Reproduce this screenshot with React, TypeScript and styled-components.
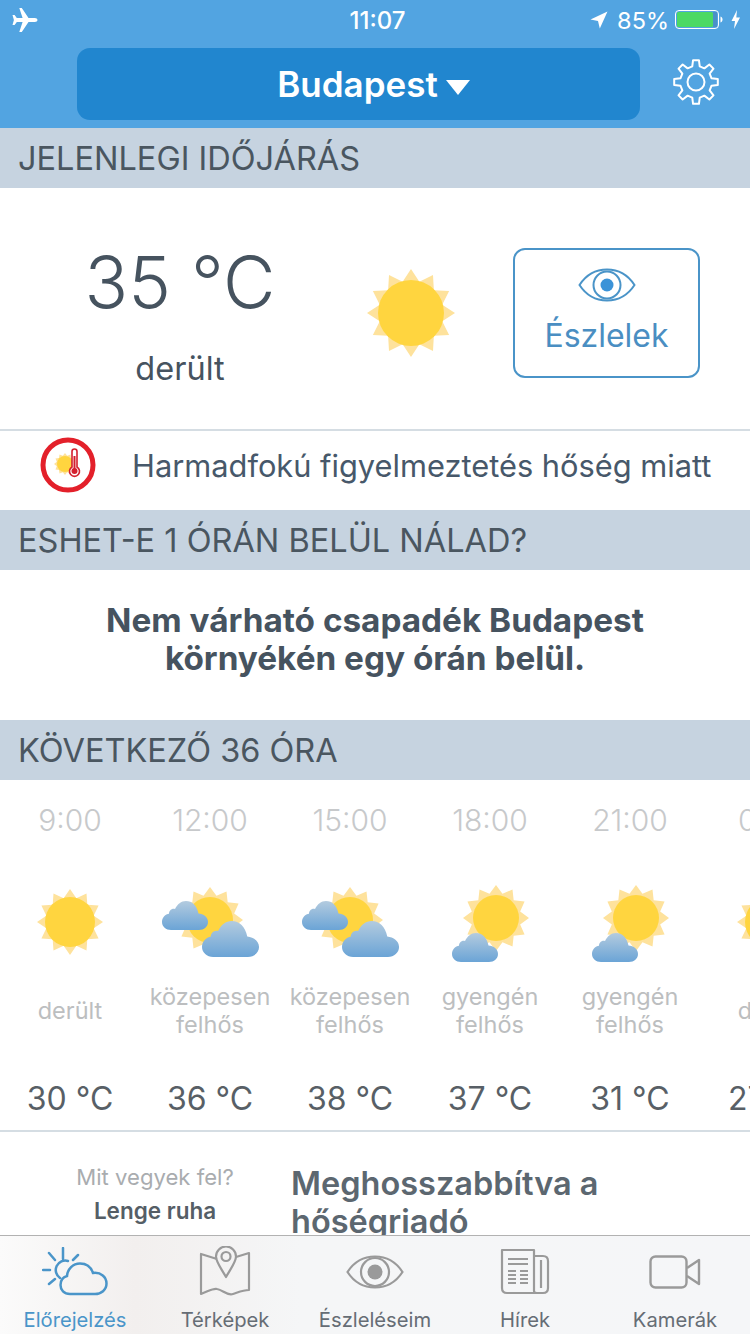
import styled, { createGlobalStyle } from "styled-components";

const GlobalStyle = createGlobalStyle`
  html, body {
    margin: 0;
    padding: 0;
    background: #fff;
  }
  * {
    box-sizing: border-box;
  }
`;

const Phone = styled.div`
  width: 750px;
  height: 1334px;
  display: flex;
  flex-direction: column;
  overflow: hidden;
  font-family: Inter, "Noto Sans", sans-serif;
  background: #fff;
`;

const Header = styled.header`
  height: 128px;
  flex-shrink: 0;
  background: #52a4e1;
  color: #fff;
`;

const StatusBar = styled.div`
  height: 40px;
  padding: 0 7px 0 12px;
  display: grid;
  grid-template-columns: 1fr auto 1fr;
  align-items: center;
`;

const StatusRight = styled.div`
  display: flex;
  align-items: center;
  justify-content: flex-end;
  gap: 9px;
  font-size: 23.5px;
`;

const Time = styled.div`
  font-size: 24px;
  font-weight: 500;
`;

const NavRow = styled.div`
  height: 88px;
  padding: 8px 31px 8px 77px;
  display: flex;
  align-items: center;
  justify-content: space-between;
`;

const CityButton = styled.div`
  width: 563px;
  height: 72px;
  padding-left: 30px;
  background: #2186cf;
  border-radius: 13px;
  display: flex;
  align-items: center;
  justify-content: center;
  gap: 8px;
  font-size: 35px;
  font-weight: 600;
`;

const Caret = styled.span`
  width: 0;
  height: 0;
  margin-top: 7px;
  border-left: 12px solid transparent;
  border-right: 12px solid transparent;
  border-top: 15px solid #fff;
`;

const GearWrap = styled.div`
  display: flex;
  margin-bottom: 4px;
`;

const Content = styled.main`
  flex: 1;
  min-height: 0;
  overflow: hidden;
`;

const SectionTitle = styled.h2`
  margin: 0;
  height: 60px;
  padding: 0 18px;
  display: flex;
  align-items: center;
  background: #c6d3e0;
  color: #4a5660;
  font-size: 32.5px;
  font-weight: 400;
  white-space: nowrap;
`;

const Current = styled.section`
  height: 243px;
  padding: 60px 50px 0 0;
  display: grid;
  grid-template-columns: 360px 153px 187px;
  align-items: start;
  border-bottom: 2px solid #d5dde3;
`;

const CurrentTemp = styled.div`
  display: flex;
  flex-direction: column;
  align-items: center;
  color: #46535f;
`;

const BigTemp = styled.div`
  margin-top: -2px;
  font-size: 72px;
  font-weight: 300;
  line-height: 72px;
`;

const Condition = styled.div`
  margin-top: 32px;
  font-size: 32.5px;
  line-height: 38px;
`;

const ReportButton = styled.div`
  height: 130px;
  border: 2px solid #4a94c8;
  border-radius: 12px;
  display: flex;
  flex-direction: column;
  align-items: center;
  gap: 14px;
  padding-top: 18px;
  color: #4a8ec2;
  font-size: 32px;
  line-height: 40px;
`;

const SunSlot = styled.div`
  height: 130px;
  display: flex;
  justify-content: center;
  padding-top: 20px;
  padding-right: 51px;
`;

const Warning = styled.section`
  height: 79px;
  padding: 0 0 11px 39px;
  display: flex;
  align-items: center;
  gap: 35px;
  color: #47586a;
  font-size: 30.8px;
  white-space: nowrap;
`;

const RainMessage = styled.section`
  height: 150px;
  padding-top: 31px;
  text-align: center;
  color: #46535f;
  font-size: 33.3px;
  font-weight: 700;
  line-height: 38px;
  white-space: nowrap;
`;

const Forecast = styled.section`
  height: 352px;
  display: flex;
  overflow: hidden;
  border-bottom: 2px solid #d5dde3;
`;

const Column = styled.div`
  width: 140px;
  flex-shrink: 0;
  display: flex;
  flex-direction: column;
  align-items: center;
  white-space: nowrap;
`;

const HourLabel = styled.div`
  height: 98px;
  padding-top: 22px;
  color: #c7c9cb;
  font-size: 30px;
  line-height: 36px;
  font-weight: 300;
`;

const Description = styled.div`
  height: 82px;
  margin-top: 2px;
  display: flex;
  align-items: center;
  text-align: center;
  color: #bcbec0;
  font-size: 23.5px;
  line-height: 28px;
`;

const TempLabel = styled.div`
  margin-top: 28px;
  color: #585f66;
  font-size: 32px;
  line-height: 38px;
`;

const Teaser = styled.section`
  display: grid;
  grid-template-columns: 291px 1fr;
  padding-top: 29px;
`;

const Clothing = styled.div`
  text-align: center;
  padding-left: 19px;
  font-size: 22.1px;
  line-height: 33px;
  color: #a9acaf;
`;

const ClothingValue = styled.div`
  color: #555e66;
  font-weight: 600;
  font-size: 22.5px;
`;

const Headline = styled.div`
  margin-top: 4px;
  color: #5c6770;
  font-size: 32.5px;
  font-weight: 600;
  line-height: 38px;
  width: 340px;
`;

const TabBar = styled.nav`
  height: 99px;
  flex-shrink: 0;
  display: grid;
  grid-template-columns: repeat(5, 150px);
  background: linear-gradient(90deg, #fbfbfb 0%, #f2efee 18%, #f5f6f7 40%, #f5f6f8 100%);
  border-top: 1px solid #b2b2b2;
`;

const Tab = styled.div<{ $active?: boolean }>`
  display: flex;
  flex-direction: column;
  align-items: center;
  color: ${(p) => (p.$active ? "#4a95c9" : "#666d75")};
  font-size: 20.2px;
  line-height: 24px;
`;

const TabIcon = styled.div`
  height: 72px;
  display: flex;
  align-items: center;
  justify-content: center;
`;

// ray polygon for the sun: 12 triangles round a circle
const starPoints = (cx: number, cy: number, outer: number, inner: number, rays = 12, turn = 0) => {
  const pts: string[] = [];
  for (let i = 0; i < rays * 2; i++) {
    const r = i % 2 === 0 ? outer : inner;
    const a = (Math.PI * i) / rays + turn;
    pts.push(`${(cx + r * Math.cos(a)).toFixed(2)},${(cy + r * Math.sin(a)).toFixed(2)}`);
  }
  return pts.join(" ");
};

const gearPath = (c: number, outer: number, root: number) => {
  const teeth = 8;
  const step = (Math.PI * 2) / teeth;
  let d = "";
  for (let i = 0; i < teeth; i++) {
    const a = i * step - Math.PI / 2;
    const p = [
      [root, a - step * 0.3],
      [outer, a - step * 0.17],
      [outer, a + step * 0.17],
      [root, a + step * 0.3],
    ];
    p.forEach(([r, t], j) => {
      const x = (c + r * Math.cos(t)).toFixed(2);
      const y = (c + r * Math.sin(t)).toFixed(2);
      d += `${i === 0 && j === 0 ? "M" : "L"}${x} ${y} `;
    });
  }
  return d + "Z";
};

const CLOUD =
  "M9 29C4 29 0 25.500 0 21C0 16.500 3.500 13.200 7 12.800C7 9.500 10 7 13 8C15.500 3 19 0 24 0C30 0 35 4.500 36.500 12.500C41.500 13 46 16 46 21C46 25.500 42 29 37 29Z";

const Sun = ({ cx, cy, core, outer }: { cx: number; cy: number; core: number; outer: number }) => (
  <>
    <polygon points={starPoints(cx, cy, outer, core * 0.98)} fill="#fee29c" />
    <circle cx={cx} cy={cy} r={core} fill="#ffd53f" />
  </>
);

const SoftSun = ({ cx, cy }: { cx: number; cy: number }) => (
  <>
    <polygon points={starPoints(cx, cy, 33, 25)} fill="#fee29c" />
    <circle cx={cx} cy={cy} r={23} fill="#ffd53f" />
  </>
);

const Cloud = ({ x, y, scale }: { x: number; y: number; scale: number }) => (
  <path d={CLOUD} fill="url(#cloudFill)" transform={`translate(${x} ${y}) scale(${scale})`} />
);

const WeatherIcon = ({ kind }: { kind: string }) => (
  <svg width="140" height="90" viewBox="0 0 140 90">
    <defs>
      <linearGradient id="cloudFill" x1="0" y1="0" x2="0" y2="1">
        <stop offset="0" stopColor="#b3cbdf" />
        <stop offset="1" stopColor="#6ba4d6" />
      </linearGradient>
    </defs>
    {kind === "clear" && <Sun cx={70} cy={44} core={25} outer={33} />}
    {kind === "mid" && (
      <>
        <SoftSun cx={70} cy={42} />
        <Cloud x={22} y={23} scale={1} />
        <Cloud x={62} y={43} scale={1.24} />
      </>
    )}
    {kind === "light" && (
      <>
        <SoftSun cx={76} cy={40} />
        <Cloud x={32} y={55} scale={1} />
      </>
    )}
  </svg>
);

const EyeIcon = () => (
  <svg width="58" height="34" viewBox="0 0 58 34">
    <path d="M1.500 17C8 7 18 1.500 29 1.500S50 7 56.500 17C50 27 40 32.500 29 32.500S8 27 1.500 17Z" fill="none" stroke="#4a94c8" strokeWidth="2" />
    <circle cx="29" cy="17" r="13.500" fill="none" stroke="#4a94c8" strokeWidth="2" />
    <circle cx="29" cy="17" r="6.500" fill="#3b93d8" />
  </svg>
);

const AlertIcon = () => (
  <svg width="58" height="58" viewBox="0 0 58 58">
    <circle cx="29" cy="29" r="25" fill="#fff" stroke="#e3202a" strokeWidth="5" />
    <polygon points={starPoints(26, 28, 11, 8.500)} fill="#fee29c" />
    <circle cx="26" cy="28" r="8" fill="#ffd53f" />
    <path d="M33 15.500a2.500 2.500 0 0 1 5 0V31a5 5 0 1 1-5 0Z" fill="#fff" stroke="#d4202e" strokeWidth="1.600" />
    <path d="M35.500 20V34" stroke="#d4202e" strokeWidth="2" />
    <circle cx="35.500" cy="35" r="3" fill="#d4202e" />
  </svg>
);

const hours = [
  { time: "9:00", kind: "clear", text: ["derült"], temp: "30 °C" },
  { time: "12:00", kind: "mid", text: ["közepesen", "felhős"], temp: "36 °C" },
  { time: "15:00", kind: "mid", text: ["közepesen", "felhős"], temp: "38 °C" },
  { time: "18:00", kind: "light", text: ["gyengén", "felhős"], temp: "37 °C" },
  { time: "21:00", kind: "light", text: ["gyengén", "felhős"], temp: "31 °C" },
  { time: "0:00", kind: "clear", text: ["derült"], temp: "27 °C" },
];

export default function App() {
  return (
    <Phone>
      <GlobalStyle />
      <Header>
        <StatusBar>
          <svg width="26" height="26" viewBox="0 0 26 26" fill="#fff">
            <path d="M25.500 13c0-1.300-1.300-2-2.600-2h-6.400L9.800 1H7.300l3.300 10H4.800L2.600 8H.5l1.400 5-1.400 5h2.100l2.200-3h5.800L7.300 25h2.500l6.700-10h6.400c1.300 0 2.600-.7 2.600-2Z" />
          </svg>
          <Time>11:07</Time>
          <StatusRight>
            <svg width="18" height="18" viewBox="0 0 18 18" fill="#fff">
              <path d="M17.500.5 9.800 17.500 8 10 .5 8.500Z" />
            </svg>
            <span>85%</span>
            <svg width="68" height="20" viewBox="0 0 68 20" style={{ marginLeft: -3 }}>
              <rect x=".5" y=".5" width="43" height="18" rx="3.500" fill="none" stroke="#fff" />
              <rect x="2" y="2" width="36" height="15" rx="1.500" fill="#4cd964" />
              <rect x="38" y="2" width="4" height="15" fill="#4a90c8" />
              <path d="M45.500 6.500c1.500.5 2 1.800 2 3s-.5 2.500-2 3Z" fill="#fff" />
              <path d="M62 0 56.500 11H60l-1 8 6-11.500h-3.700Z" fill="#fff" />
            </svg>
          </StatusRight>
        </StatusBar>
        <NavRow>
          <CityButton>
            Budapest
            <Caret />
          </CityButton>
          <GearWrap>
            <svg width="46" height="46" viewBox="0 0 46 46" fill="none" stroke="#fff" strokeWidth="2" strokeLinejoin="round">
              <path d={gearPath(23, 22, 16)} />
              <circle cx="23" cy="23" r="8.500" />
            </svg>
          </GearWrap>
        </NavRow>
      </Header>

      <Content>
        <SectionTitle>JELENLEGI IDŐJÁRÁS</SectionTitle>
        <Current>
          <CurrentTemp>
            <BigTemp>35 °C</BigTemp>
            <Condition>derült</Condition>
          </CurrentTemp>
          <SunSlot>
            <svg width="90" height="90" viewBox="0 0 90 90">
              <Sun cx={45} cy={45} core={33} outer={44} />
            </svg>
          </SunSlot>
          <ReportButton>
            <EyeIcon />
            <span>Észlelek</span>
          </ReportButton>
        </Current>
        <Warning>
          <AlertIcon />
          Harmadfokú figyelmeztetés hőség miatt
        </Warning>

        <SectionTitle>ESHET-E 1 ÓRÁN BELÜL NÁLAD?</SectionTitle>
        <RainMessage>
          Nem várható csapadék Budapest
          <br />
          környékén egy órán belül.
        </RainMessage>

        <SectionTitle>KÖVETKEZŐ 36 ÓRA</SectionTitle>
        <Forecast>
          {hours.map((h) => (
            <Column key={h.time}>
              <HourLabel>{h.time}</HourLabel>
              <WeatherIcon kind={h.kind} />
              <Description>
                <div>
                  {h.text.map((line) => (
                    <div key={line}>{line}</div>
                  ))}
                </div>
              </Description>
              <TempLabel>{h.temp}</TempLabel>
            </Column>
          ))}
        </Forecast>

        <Teaser>
          <Clothing>
            Mit vegyek fel?
            <ClothingValue>Lenge ruha</ClothingValue>
          </Clothing>
          <Headline>Meghosszabbítva a hőségriadó</Headline>
        </Teaser>
      </Content>

      <TabBar>
        <Tab $active>
          <TabIcon>
            <svg width="66" height="50" viewBox="0 0 66 50" fill="none" stroke="#4a95c9" strokeWidth="2.500" strokeLinecap="round">
              <path d="M21 1V12M7 6l6 7M36 8l-5 5M1 23H8M7 37l6-5" />
              <path d="M26 14a9.500 9.500 0 0 0-8 17" />
              <path d="M28 47C22 47 18.500 43 18.500 38S21.500 30 25 29C25.500 22 31 16.500 38 16.500S49 20 51 26C59 25 64.500 30 64.500 36.500S59 47 53 47Z" />
            </svg>
          </TabIcon>
          Előrejelzés
        </Tab>
        <Tab>
          <TabIcon>
            <svg width="52" height="52" viewBox="0 0 52 52" fill="none" stroke="#9a9a9a" strokeWidth="2.200" strokeLinejoin="round">
              <path d="M18 13 2 8v40c8-3 12-6 16-5 6 1 10 7 16 5 6-2 10-4 16-4V7l-13 4" />
              <path d="M27 31C22 22 17 16 17 10.500a10 10 0 0 1 20 0C37 16 32 22 27 31Z" />
              <circle cx="27" cy="10.500" r="4.500" />
            </svg>
          </TabIcon>
          Térképek
        </Tab>
        <Tab>
          <TabIcon>
            <svg width="58" height="34" viewBox="0 0 58 34" fill="none" stroke="#9a9a9a" strokeWidth="2.200">
              <path d="M1.500 17C8 7 18 1.500 29 1.500S50 7 56.500 17C50 27 40 32.500 29 32.500S8 27 1.500 17Z" />
              <circle cx="29" cy="17" r="14" />
              <circle cx="29" cy="17" r="7.500" fill="#9a9a9a" stroke="none" />
            </svg>
          </TabIcon>
          Észleléseim
        </Tab>
        <Tab>
          <TabIcon>
            <svg width="50" height="48" viewBox="0 0 50 48" fill="none" stroke="#9a9a9a" strokeWidth="2.200" strokeLinejoin="round">
              <path d="M34 43V2H2v38c0 3 2 5 5 5h36c3 0 5-2 5-5V13c0-3-2-5-5-5h-9" />
              <path d="M34 43c0 1 1 2 3 2M41 12v28" />
              <path d="M8 11h20M8 16h20" strokeWidth="2" />
              <path d="M8 23h8M8 27h8M8 31h8M8 35h8M20 23h8M20 27h8M20 31h8M20 35h8" strokeWidth="2" />
            </svg>
          </TabIcon>
          Hírek
        </Tab>
        <Tab>
          <TabIcon>
            <svg width="52" height="34" viewBox="0 0 52 34" fill="none" stroke="#9a9a9a" strokeWidth="2.400" strokeLinejoin="round">
              <rect x="1.500" y="1.500" width="36" height="31" rx="5" />
              <path d="M38 13 50 5v24l-12-8" />
            </svg>
          </TabIcon>
          Kamerák
        </Tab>
      </TabBar>
    </Phone>
  );
}
